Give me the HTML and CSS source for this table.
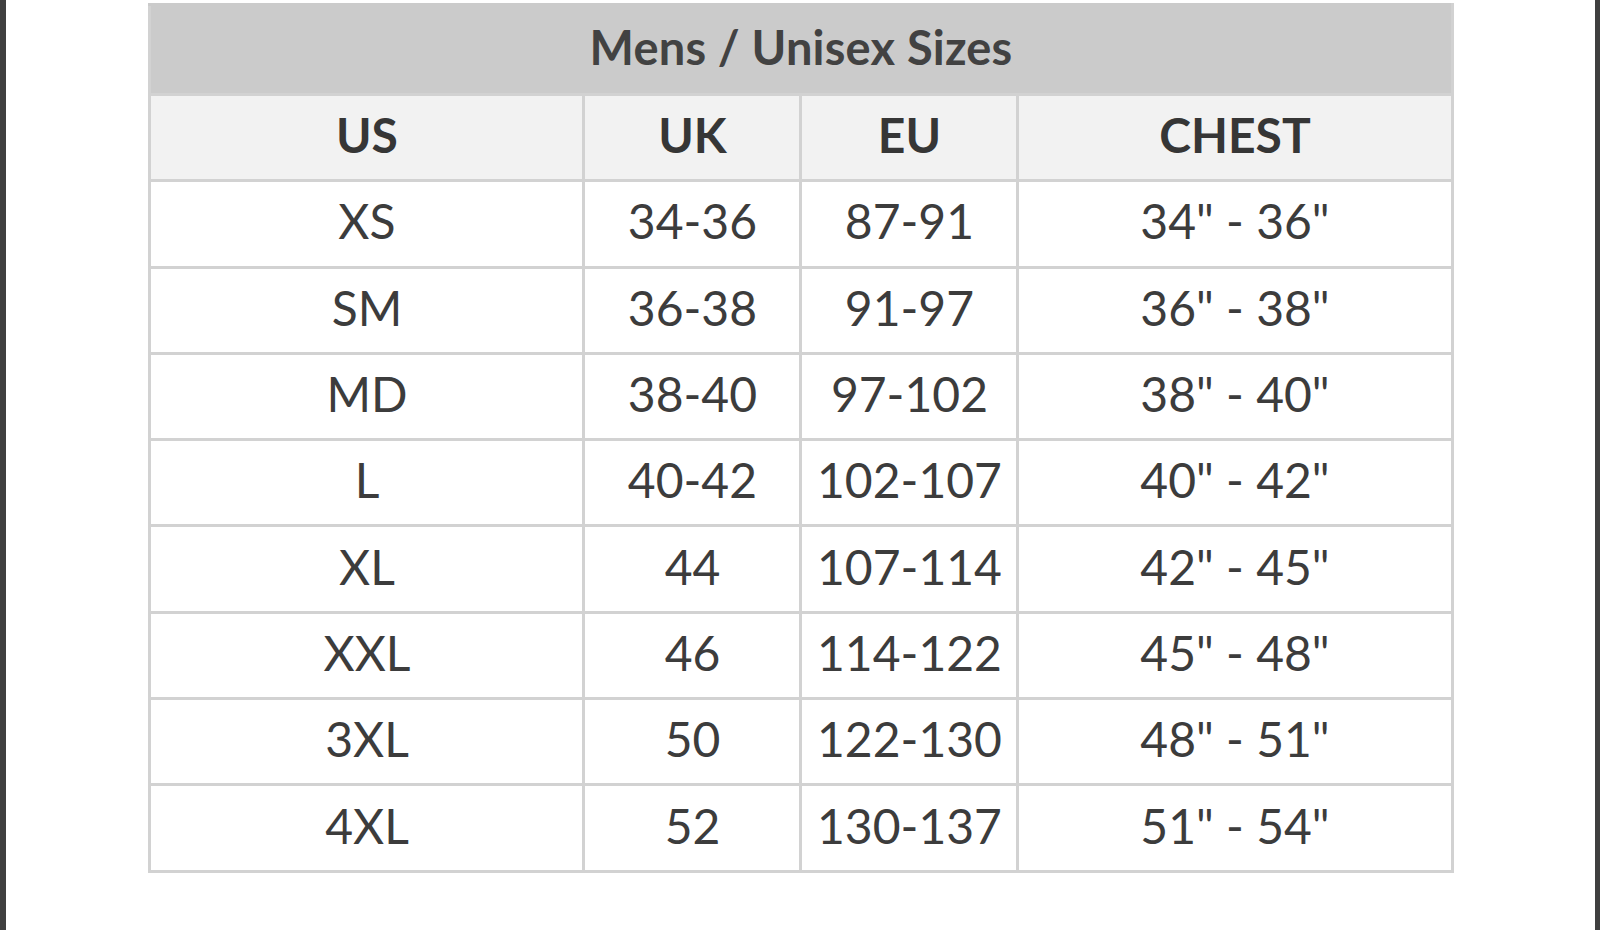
FILE: index.html
```html
<!DOCTYPE html>
<html lang="en">
<head>
<meta charset="utf-8">
<title>Mens / Unisex Sizes</title>
<link rel="stylesheet" href="styles.css">
</head>
<body>
<div class="frame">
  <table class="sizes">
    <colgroup>
      <col class="c-wide"><col class="c-narrow"><col class="c-narrow"><col class="c-wide">
    </colgroup>
    <thead>
      <tr class="title-row"><th colspan="4">Mens / Unisex Sizes</th></tr>
      <tr class="head-row"><th>US</th><th>UK</th><th>EU</th><th>CHEST</th></tr>
    </thead>
    <tbody>
      <tr><td>XS</td><td>34-36</td><td>87-91</td><td>34" - 36"</td></tr>
      <tr><td>SM</td><td>36-38</td><td>91-97</td><td>36" - 38"</td></tr>
      <tr><td>MD</td><td>38-40</td><td>97-102</td><td>38" - 40"</td></tr>
      <tr><td>L</td><td>40-42</td><td>102-107</td><td>40" - 42"</td></tr>
      <tr><td>XL</td><td>44</td><td>107-114</td><td>42" - 45"</td></tr>
      <tr><td>XXL</td><td>46</td><td>114-122</td><td>45" - 48"</td></tr>
      <tr><td>3XL</td><td>50</td><td>122-130</td><td>48" - 51"</td></tr>
      <tr><td>4XL</td><td>52</td><td>130-137</td><td>51" - 54"</td></tr>
    </tbody>
  </table>
</div>
</body>
</html>
```

FILE: styles.css
```css
html, body {
  margin: 0;
  padding: 0;
  background: #ffffff;
}

.frame {
  box-sizing: border-box;
  width: 1600px;
  height: 930px;
  border-left: 6px solid #3f3f3f;
  border-right: 5px solid #3f3f3f;
  padding-top: 3px;
  display: flex;
  justify-content: center;
  align-items: flex-start;
}

.sizes {
  border-collapse: collapse;
  table-layout: fixed;
  width: 1302px;
  margin-left: 1px;
  font-family: Lato, "Open Sans", sans-serif;
  color: #3c3c3c;
  font-size: 48px;
  text-align: center;
}

.c-wide { width: 434px; }
.c-narrow { width: 217px; }

.sizes th,
.sizes td {
  border: 3px solid #d2d2d2;
  padding: 0 0 5px 0;
  text-align: center;
  vertical-align: middle;
  line-height: 1;
}

.title-row th {
  height: 83px;
  padding-bottom: 4px;
  background: #cbcbcb;
  border-color: #cbcbcb #d2d2d2 #d2d2d2 #d2d2d2;
  font-weight: 700;
  font-size: 47px;
  letter-spacing: 0.2px;
  color: #424242;
}

.head-row th {
  height: 78.3px;
  background: #f2f2f2;
  font-weight: 700;
  color: #363636;
}

.sizes td {
  height: 78.3px;
  font-weight: 400;
  background: #ffffff;
}
```
